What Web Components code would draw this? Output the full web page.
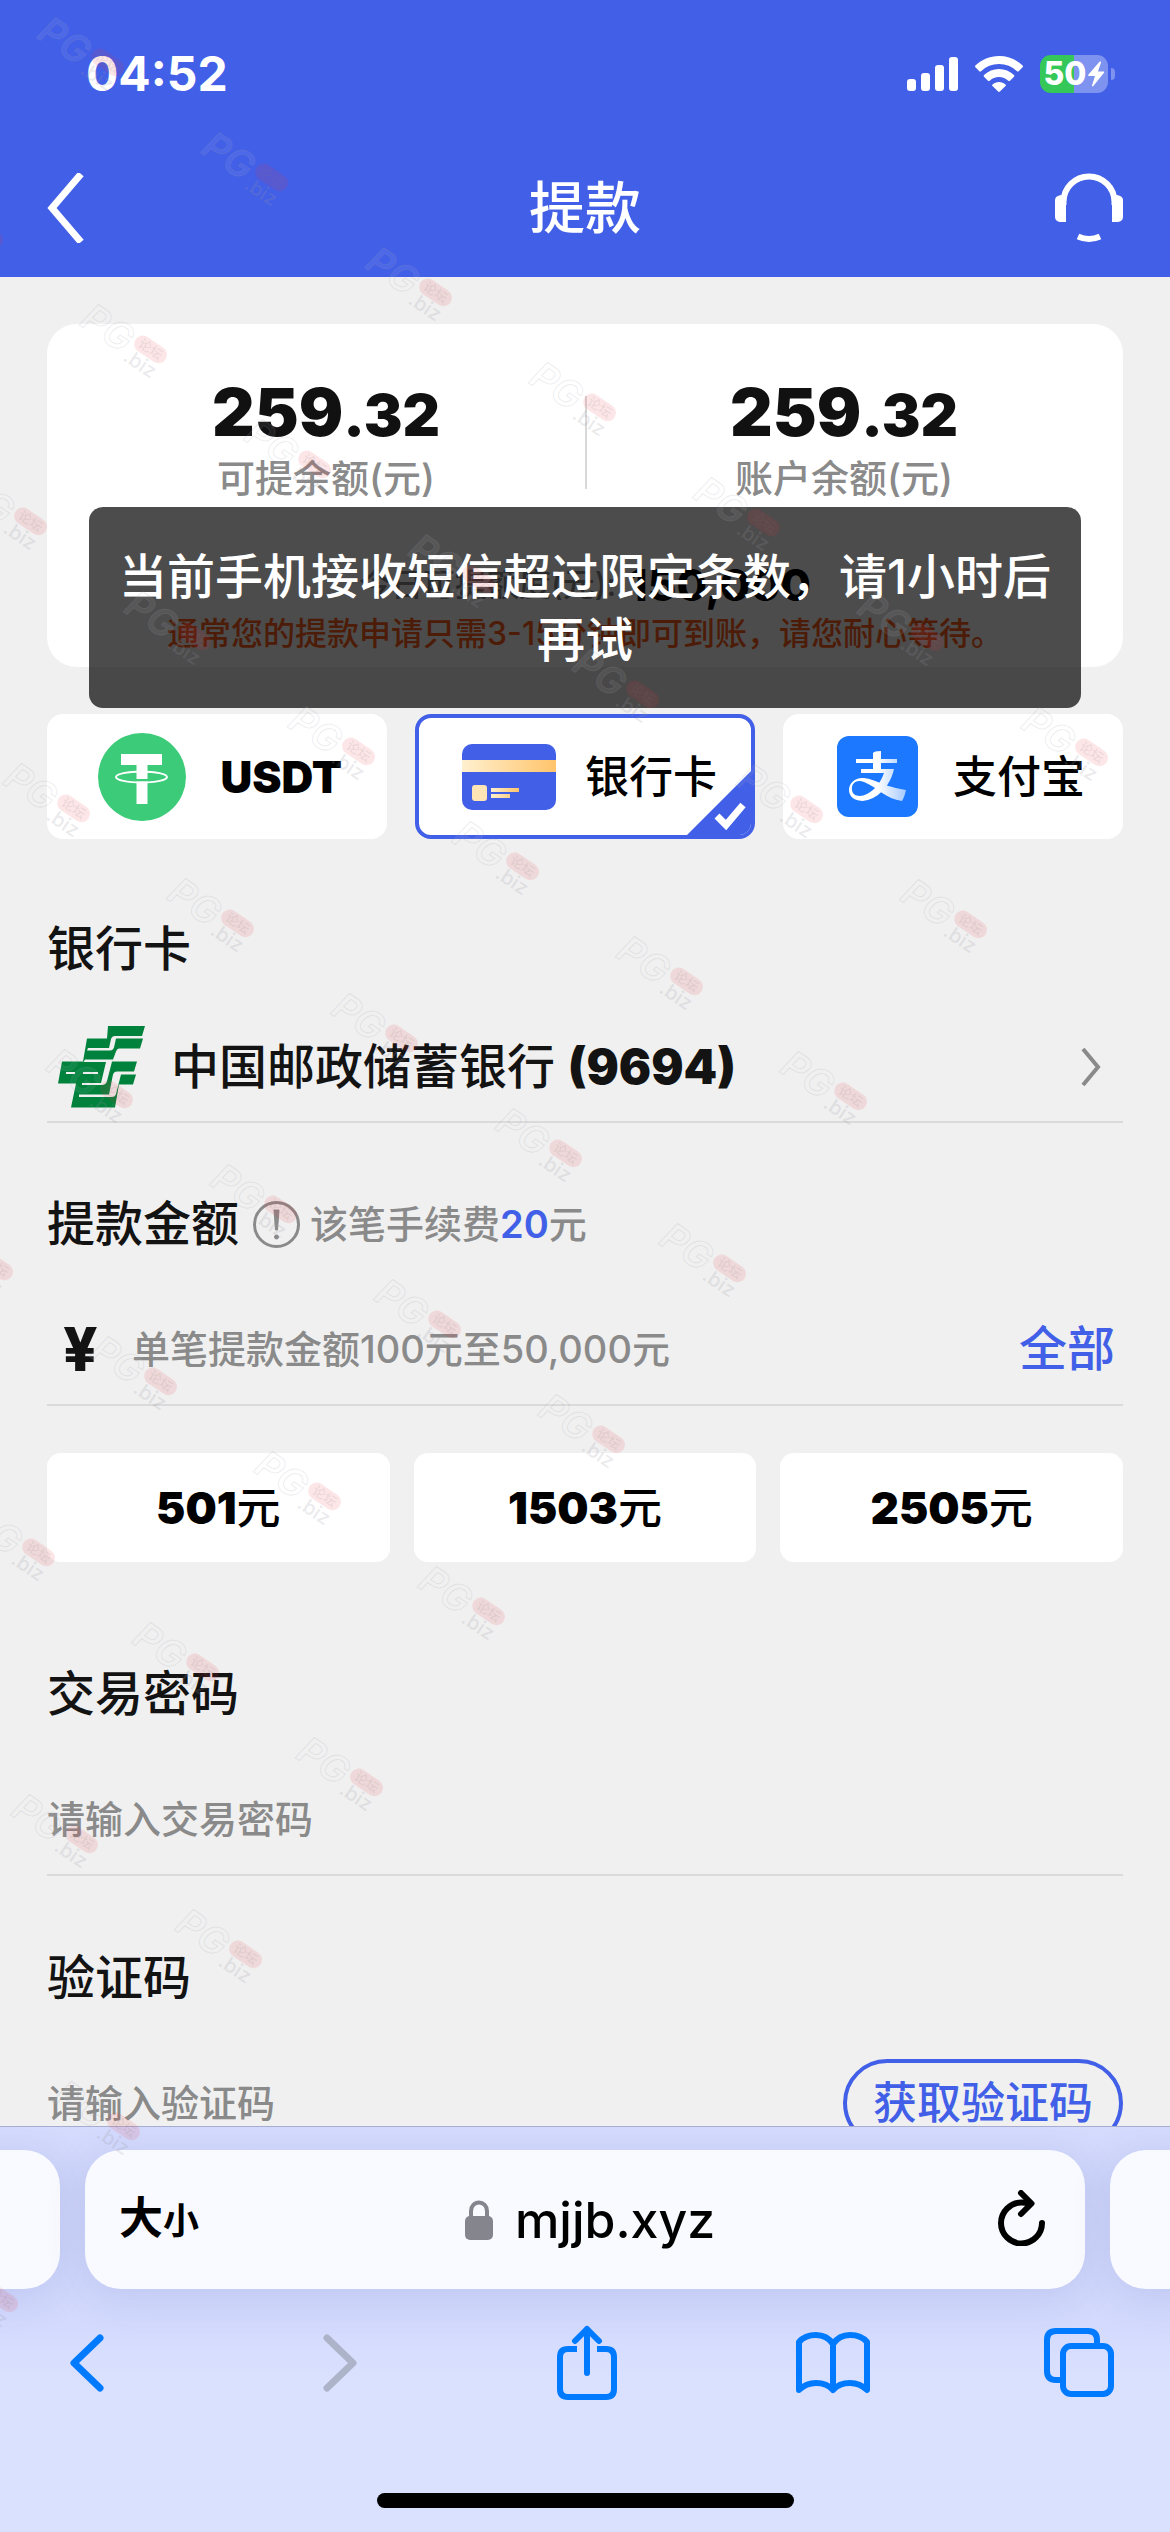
<!DOCTYPE html>
<html lang="zh-CN">
<head>
<meta charset="utf-8">
<meta name="viewport" content="width=device-width, initial-scale=1">
<title>提款</title>
<style>
  :root {
    --brand: #425fe7;
    --ink: #131313;
    --muted: #8a8a8a;
    --line: #dadada;
    --page: #f0f0f0;
  }
  body {
    margin: 0;
    background: var(--page);
    color: var(--ink);
    font-family: Inter, "Noto Sans CJK SC", sans-serif;
    font-weight: 500;
    font-size: 38px;
  }
</style>
</head>
<body>
<phone-screen>
  <status-bar slot="top" time="04:52" battery="50"></status-bar>
  <nav-header slot="top">提款</nav-header>

  <balance-card>
    <balance-figure whole="259" cents=".32">可提余额(元)</balance-figure>
    <balance-figure whole="259" cents=".32">账户余额(元)</balance-figure>
    <span slot="quota">今日可提额度(元):</span>
    <b slot="quota-value">150,000</b>
    <span slot="notice">通常您的提款申请只需3-15分钟即可到账，请您耐心等待。</span>
    <toast-message slot="toast">当前手机接收短信超过限定条数，请1小时后再试</toast-message>
  </balance-card>

  <pay-methods>
    <pay-method kind="usdt">USDT</pay-method>
    <pay-method kind="card" selected>银行卡</pay-method>
    <pay-method kind="alipay">支付宝</pay-method>
  </pay-methods>

  <bank-section number="(9694)">中国邮政储蓄银行</bank-section>
  <amount-section></amount-section>
  <field-section label="交易密码" hint="请输入交易密码" type="password"></field-section>
  <field-section label="验证码" hint="请输入验证码" type="text" action="获取验证码"></field-section>

  <browser-bar slot="bottom">mjjb.xyz</browser-bar>
  <water-marks slot="overlay"></water-marks>
</phone-screen>

<script>
const reset = `
  :host, *, *::before, *::after { box-sizing: border-box; }
  :host { display: block; }
  button, input { font: inherit; color: inherit; background: none; border: 0; padding: 0; margin: 0; border-radius: 0; }
  a { color: inherit; text-decoration: none; }
  svg { display: block; flex: none; }
  h2 { margin: 0; font-size: 48px; line-height: 64px; font-weight: 500; color: var(--ink); }
`;
function define(name, render) {
  customElements.define(name, class extends HTMLElement {
    connectedCallback() {
      if (this.shadowRoot) return;
      const root = this.attachShadow({ mode: 'open' });
      root.innerHTML = `<style>${reset}</style>` + render(this);
    }
  });
}

define('phone-screen', () => `
  <style>
    :host { display: flex; flex-direction: column; height: 100vh; position: relative; overflow: hidden; }
    header, footer { flex: none; }
    main { flex: 1; min-height: 0; overflow: hidden; padding: 47px 47px 0; }
  </style>
  <header><slot name="top"></slot></header>
  <main><slot></slot></main>
  <footer><slot name="bottom"></slot></footer>
  <slot name="overlay"></slot>`);

define('status-bar', el => `
  <style>
    :host { display: flex; justify-content: space-between; align-items: center; height: 148px;
      padding: 0 55px 0 86px; background: var(--brand); color: #fff; }
    time { font-size: 48px; font-weight: 700; line-height: 56px; }
    .icons { display: flex; align-items: center; gap: 17px; }
    .battery { display: flex; align-items: center; gap: 3px; }
    .cell { display: flex; align-items: center; justify-content: center; width: 68px; height: 38px;
      border-radius: 11px; background: linear-gradient(90deg, #36c759 50%, #7d93ef 50%);
      font-size: 32px; font-weight: 800; line-height: 38px; }
    .nub { width: 4px; height: 12px; border-radius: 0 4px 4px 0; background: #7d93ef; }
  </style>
  <time>${el.getAttribute('time')}</time>
  <div class="icons">
    <svg width="51" height="34" viewBox="0 0 51 34" fill="#fff"><rect y="22" width="9" height="12" rx="3"/><rect x="14" y="16" width="9" height="18" rx="3"/><rect x="28" y="8" width="9" height="26" rx="3"/><rect x="42" width="9" height="34" rx="3"/></svg>
    <svg width="48" height="36" viewBox="0 0 48 36" fill="#fff"><path d="M24 0C14.800 0 6.500 3.600.4 9.500a1.200 1.200 0 0 0 0 1.700l3.900 4a1.200 1.200 0 0 0 1.700 0A26 26 0 0 1 24 8a26 26 0 0 1 18 7.200c.5.5 1.200.5 1.700 0l3.900-4a1.200 1.200 0 0 0 0-1.700A34 34 0 0 0 24 0Z"/><path d="M24 13a22 22 0 0 0-15 6 1.200 1.200 0 0 0 0 1.700l4 4c.5.5 1.200.5 1.700 0A13.500 13.500 0 0 1 24 21c3.500 0 6.800 1.400 9.300 3.700.5.5 1.200.5 1.700 0l4-4a1.200 1.200 0 0 0 0-1.700 22 22 0 0 0-15-6Z"/><path d="M24 26c-2.500 0-4.800.9-6.500 2.400a1.200 1.200 0 0 0 0 1.700l5.600 5.500c.5.500 1.300.5 1.800 0l5.600-5.500a1.200 1.200 0 0 0 0-1.700C28.800 26.900 26.500 26 24 26Z"/></svg>
    <div class="battery"><div class="cell">${el.getAttribute('battery')}<svg width="18" height="26" viewBox="0 0 18 26" fill="#fff"><path d="M12.500.8 1.300 13.800c-.5.600-.1 1.200.6 1.200H8L5 24.500c-.2 1 .7 1.200 1.300.5L17 11.800c.5-.6.100-1.300-.6-1.300H11l3-9c.2-.9-.9-1.400-1.500-.7Z"/></svg></div><div class="nub"></div></div>
  </div>`);

define('nav-header', () => `
  <style>
    :host { display: flex; justify-content: space-between; align-items: center; height: 129px;
      padding: 0 47px 9px; background: var(--brand); color: #fff; }
    h1 { margin: 0; font-size: 56px; line-height: 72px; font-weight: 500; }
    button, a { display: flex; width: 68px; }
    a { justify-content: flex-end; }
  </style>
  <button aria-label="返回"><svg width="37" height="70" viewBox="0 0 37 70" fill="none" stroke="#fff" stroke-width="7"><path d="M34 1 5 35l29 34"/></svg></button>
  <h1><slot></slot></h1>
  <a href="#service" aria-label="客服"><svg width="68" height="70" viewBox="0 0 68 70"><path d="M8.500 32v-3a25.500 25.500 0 0 1 51 0v3" fill="none" stroke="#fff" stroke-width="6"/><path d="M6 22h5v27H5a5 5 0 0 1-5-5V27q0-4 6-5ZM62 22h-5v27h6a5 5 0 0 0 5-5V27q0-4-6-5Z" fill="#fff"/><path d="M23 63.500q11 5 22 0" fill="none" stroke="#fff" stroke-width="6"/></svg></a>`);

define('balance-card', () => `
  <style>
    :host { position: relative; height: 343px; padding-top: 52px; border-radius: 30px; background: #fff; }
    .figures { display: flex; position: relative; padding: 0 20px; }
    .figures::after { content: ""; position: absolute; left: 50%; top: 20px; width: 2px; height: 93px; background: #d8d8d8; }
    .quota { display: flex; justify-content: center; align-items: center; gap: 12px; margin-top: 52px; line-height: 56px; font-size: 32px; color: var(--muted); }
    .value { font-size: 44px; color: #000; }
    ::slotted(b) { font-weight: 800; }
    .notice { text-align: center; font-size: 32px; line-height: 42px; color: #ff6020; white-space: nowrap; }
    .toast { position: absolute; left: 42px; right: 42px; top: 183px; }
  </style>
  <div class="figures"><slot></slot></div>
  <div class="quota"><slot name="quota"></slot><span class="value"><slot name="quota-value"></slot></span></div>
  <div class="notice"><slot name="notice"></slot></div>
  <div class="toast"><slot name="toast"></slot></div>`);

define('balance-figure', el => `
  <style>
    :host { flex: 1; text-align: center; }
    .sum { line-height: 72px; font-size: 66px; font-weight: 900; color: #111; }
    small { font-size: 58px; }
    .label { line-height: 54px; color: var(--muted); }
  </style>
  <div class="sum">${el.getAttribute('whole')}<small>${el.getAttribute('cents')}</small></div>
  <div class="label"><slot></slot></div>`);

define('toast-message', () => `
  <style>
    :host { padding: 38px 28px 37px; border-radius: 14px; background: rgba(0, 0, 0, .7); color: #fff;
      font-size: 48px; line-height: 63px; text-align: center; }
  </style>
  <div role="alert"><slot></slot></div>`);

define('pay-methods', () => `
  <style>:host { display: flex; gap: 28px; margin-top: 47px; }</style>
  <slot></slot>`);

const payIcons = {
  usdt: `<svg width="88" height="88" viewBox="0 0 88 88"><circle cx="44" cy="44" r="44" fill="#3ccb78"/><path d="M23 21h41v11H49.500v14h-11V32H23Z" fill="#fff"/><path d="M38.500 48.500h11V71h-11Z" fill="#fff"/><ellipse cx="43.500" cy="44" rx="25.500" ry="5.500" fill="none" stroke="#fff" stroke-width="2"/></svg>`,
  card: `<svg width="94" height="66" viewBox="0 0 94 66"><defs><linearGradient id="g"><stop stop-color="#fff0cf"/><stop offset="1" stop-color="#ffc46b"/></linearGradient></defs><rect width="94" height="66" rx="10" fill="#425fe7"/><path d="M0 16h94v12H0Z" fill="url(#g)"/><rect x="10" y="41" width="15" height="16" rx="3" fill="#ffe5b5"/><path d="M29 44h28v4H29ZM29 50h19v4H29Z" fill="url(#g)"/></svg>`,
  alipay: `<svg width="81" height="81" viewBox="0 0 81 81"><defs><linearGradient id="a" x1="0" x2="1"><stop offset=".5" stop-color="#fff"/><stop offset="1" stop-color="#fff" stop-opacity=".6"/></linearGradient></defs><rect width="81" height="81" rx="12" fill="#1b78ff"/><path d="M19 23h17v-6q1-2 8-2v8h16v4H44v6h13C55 43 48 56 36 62q-8 4-14 2.500c-6-1-10-5-10-10.500 0-7 6-12 13-12 12 0 22 9 44 12-1 4-2 8-4 11-16-2-25-14-38-19-8-3-13 2-12 8 1 7 9 7 15 4 8-4 14-12 17-21H24v-4h12v-6H19Z" fill="url(#a)"/></svg>`
};
define('pay-method', el => {
  const selected = el.hasAttribute('selected');
  return `
  <style>
    :host { flex: 1; }
    button { position: relative; display: flex; align-items: center; justify-content: space-between; width: 100%; height: 125px;
      padding: 0 34px 0 43px; border: 4px solid #fff; border-radius: 16px; background: #fff; overflow: hidden;
      font-size: 44px; line-height: 60px; font-weight: 500; color: #000; }
    :host([kind=usdt]) button { font-weight: 900; padding: 0 41px 0 47px; }
    :host([kind=alipay]) button { padding: 0 34px 0 50px; }
    :host([selected]) button { border-color: var(--brand); }
    .tick { position: absolute; right: 0; bottom: 0; }
  </style>
  <button aria-pressed="${selected}">${payIcons[el.getAttribute('kind')]}<span><slot></slot></span>
  ${selected ? '<svg class="tick" width="64" height="64" viewBox="0 0 64 64"><path d="M64 0v64H0Z" fill="#425fe7"/><path d="m30 45 9 9 17-20" fill="none" stroke="#fff" stroke-width="7"/></svg>' : ''}</button>`;
});

define('bank-section', el => `
  <style>
    :host { margin-top: 78px; }
    button { display: flex; align-items: center; width: 100%; height: 110px; margin-top: 32px; padding: 0 21px 0 11px;
      border-bottom: 2px solid var(--line); font-size: 48px; line-height: 64px; text-align: left; }
    .name { flex: 1; margin-left: 25px; }
    b { font-weight: 900; }
  </style>
  <h2>银行卡</h2>
  <button>
    <svg width="88" height="82" viewBox="0 0 88 82"><path d="M50 0h37l-3 10H57q-3 0-4 3l-2 9H30l-1 2.500h23q3 0 4-3l2-9h27l-3 10H61q-2 0-3 3l-3 8H27l-1.500 2.500H48l-5 21H24v2H44q4 0 5-4l5-19.500h25l-3 10H59q-3 0-4 3l-4 20H21v2.500h33q3 0 4-3l5-19.500h15l-3 10h-14l-4 23H13l5-24H0l4-22h21l4-23h20Z" fill="#00823c"/><path d="M8 47h9M25 47h15" stroke="#f0f0f0" stroke-width="2"/></svg>
    <span class="name"><slot></slot> <b>${el.getAttribute('number')}</b></span>
    <svg width="21" height="38" viewBox="0 0 21 38" fill="none" stroke="#8a8a8a" stroke-width="4"><path d="m2 1 15 18L2 37"/></svg>
  </button>`);

define('amount-section', () => `
  <style>
    :host { margin-top: 69px; }
    .head { display: flex; align-items: center; }
    .head svg { margin: 0 10px 0 14px; }
    .fee { line-height: 64px; color: var(--muted); }
    .fee b { font-weight: 600; color: var(--brand); }
    .row { display: flex; align-items: center; height: 113px; margin-top: 37px; border-bottom: 2px solid var(--line); }
    .yen { width: 85px; padding-left: 16px; font-size: 60px; line-height: 64px; font-weight: 800; }
    input { flex: 1; min-width: 0; height: 64px; outline: 0; }
    input::placeholder { color: var(--muted); opacity: 1; }
    .all { margin-right: 8px; font-size: 48px; line-height: 64px; color: var(--brand); }
    .chips { display: flex; gap: 24px; margin-top: 47px; }
    .chips button { flex: 1; height: 109px; border-radius: 14px; background: #fff; color: #000; font-size: 44px; line-height: 60px; }
    .chips b { font-weight: 900; }
  </style>
  <div class="head">
    <h2><label for="amount">提款金额</label></h2>
    <svg width="47" height="47" viewBox="0 0 47 47" fill="none" stroke="#8a8a8a"><circle cx="23.500" cy="23.500" r="22" stroke-width="3"/><path d="m21 9 1.500 20h2L26 9Z" fill="#8a8a8a" stroke-linejoin="round"/><circle cx="23.500" cy="36" r="2" fill="#8a8a8a"/></svg>
    <span class="fee">该笔手续费<b>20</b>元</span>
  </div>
  <div class="row"><span class="yen">¥</span><input id="amount" inputmode="decimal" placeholder="单笔提款金额100元至50,000元"><button class="all">全部</button></div>
  <div class="chips"><button><b>501</b>元</button><button><b>1503</b>元</button><button><b>2505</b>元</button></div>`);

define('field-section', el => {
  const action = el.getAttribute('action');
  return `
  <style>
    :host { margin-top: ${action ? 70 : 100}px; }
    .row { display: flex; align-items: center; height: 113px; margin-top: 37px; border-bottom: 2px solid var(--line); }
    input { flex: 1; min-width: 0; height: 64px; outline: 0; }
    input::placeholder { color: var(--muted); opacity: 1; }
    button { height: 88px; padding: 0 26px; border: 4px solid var(--brand); border-radius: 44px; color: var(--brand); font-size: 44px; line-height: 60px; }
  </style>
  <h2><label for="field">${el.getAttribute('label')}</label></h2>
  <div class="row"><input id="field" type="${el.getAttribute('type')}" placeholder="${el.getAttribute('hint')}">${action ? `<button>${action}</button>` : ''}</div>`;
});

define('browser-bar', () => `
  <style>
    :host { display: flex; flex-direction: column; position: relative; height: 406px; border-top: 1px solid #a6acd2;
      background: linear-gradient(#d5dbfd, #cfd6fa 60px, #d3dafd 200px, #dae1ff 250px); overflow: hidden; }
    .tabs { display: flex; gap: 25px; margin: 23px -60px 0; }
    .tab { height: 139px; border-radius: 36px; background: #f9faff; box-shadow: 0 8px 40px rgba(80, 95, 180, .14); }
    .side { flex: none; width: 120px; }
    .address { flex: 1; display: flex; align-items: center; justify-content: space-between; padding: 0 40px 0 34px; color: #000; }
    .size { width: 146px; text-align: left; font-size: 44px; line-height: 60px; font-weight: 700; }
    .size small { font-size: 36px; }
    .site { display: flex; align-items: center; gap: 22px; font-size: 50px; line-height: 64px; }
    .reload { width: 130px; display: flex; justify-content: flex-end; padding-bottom: 4px; }
    nav { display: flex; justify-content: space-between; align-items: center; height: 90px; margin-top: 29px; padding: 0 53px 0 56px; color: #007aff; }
    nav button { display: flex; justify-content: center; width: 76px; }
    nav button:first-child { justify-content: flex-start; padding-left: 14px; }
    nav button:disabled { color: #adb3c8; }
    .home { width: 417px; height: 15px; margin: 85px auto 0; border-radius: 8px; background: #000; }
  </style>
  <div class="tabs">
    <div class="tab side"></div>
    <div class="tab address">
      <button class="size" aria-label="大小">大<small>小</small></button>
      <a class="site" href="#site"><svg width="28" height="40" viewBox="0 0 28 40"><path d="M6 18V11a8 8.500 0 0 1 16 0v7" fill="none" stroke="#85868d" stroke-width="4"/><rect y="16" width="28" height="24" rx="5" fill="#85868d"/></svg><span><slot></slot></span></a>
      <button class="reload" aria-label="刷新"><svg width="47" height="56" viewBox="0 0 47 56" fill="none" stroke="#000" stroke-width="6" stroke-linecap="round" stroke-linejoin="round"><path d="M44 33a20.500 20.500 0 1 1-20.500-20.500q4 0 8 1"/><path d="m23 3 10.500 10.500L23 24"/></svg></button>
    </div>
    <div class="tab side"></div>
  </div>
  <nav aria-label="浏览器">
    <button aria-label="后退"><svg width="34" height="58" viewBox="0 0 34 58" fill="none" stroke="currentColor" stroke-width="7" stroke-linecap="round" stroke-linejoin="round"><path d="M30 4 4 29l26 25"/></svg></button>
    <button aria-label="前进" disabled><svg width="34" height="58" viewBox="0 0 34 58" fill="none" stroke="currentColor" stroke-width="7" stroke-linecap="round" stroke-linejoin="round"><path d="m4 4 26 25L4 54"/></svg></button>
    <button aria-label="分享"><svg width="60" height="76" viewBox="0 0 60 76" fill="none" stroke="currentColor" stroke-width="6" stroke-linecap="round" stroke-linejoin="round"><path d="M20 24H11q-8 0-8 8v32q0 8 8 8h38q8 0 8-8V32q0-8-8-8h-9" stroke-linecap="butt"/><path d="M30 48V4M18 16 30 4l12 12"/></svg></button>
    <button aria-label="书签"><svg width="74" height="62" viewBox="0 0 74 62" fill="none" stroke="currentColor" stroke-width="6" stroke-linejoin="round"><path d="M37 12Q31 3 20 3 9 3 3 10v48q7-7 17-7 11 0 17 7 6-7 17-7 10 0 17 7V10q-6-7-17-7-11 0-17 9v46"/></svg></button>
    <button aria-label="标签页"><svg width="70" height="70" viewBox="0 0 70 70" fill="none" stroke="currentColor" stroke-width="6"><path d="M17 52h-5q-9 0-9-9V12q0-9 9-9h32q9 0 9 9v5"/><rect x="19" y="18" width="48" height="48" rx="8"/></svg></button>
  </nav>
  <div class="home"></div>`);

/* Diagonal chains of marks: start point of each chain and number of marks in it. */
const chains = [[34, 14, 7], [-87, 186, 7], [-43, 473, 6], [0, 760, 5], [43, 1046, 4], [-77, 1218, 4], [-35, 1504, 3], [8, 1791, 2], [50, 2078, 1], [-72, 2250, 1]];
define('water-marks', () => `
  <style>
    :host { position: absolute; inset: 0; overflow: hidden; pointer-events: none; }
    .mark { position: absolute; display: flex; gap: 3px; transform: rotate(34deg); transform-origin: 0 0; }
    .big { font-size: 38px; line-height: 28px; font-weight: 600; font-style: italic; color: rgba(255, 255, 255, .08); -webkit-text-stroke: 1px rgba(150, 150, 160, .18); }
    .pill { display: block; width: 36px; height: 17px; border-radius: 9px; background: rgba(240, 50, 60, .12);
      font-size: 13px; line-height: 17px; text-align: center; color: rgba(120, 120, 120, .14); }
    .biz { display: block; font-size: 20px; line-height: 18px; color: rgba(150, 150, 160, .2); }
  </style>
  ${chains.map(([x, y, n]) => Array.from({ length: n }, (_, i) =>
    `<div class="mark" aria-hidden="true" style="left:${x + 17 + 164 * i}px;top:${y + 115 * i}px"><span class="big">PG</span><span><span class="pill">论坛</span><span class="biz">.biz</span></span></div>`).join('')).join('')}`);
</script>
</body>
</html>
